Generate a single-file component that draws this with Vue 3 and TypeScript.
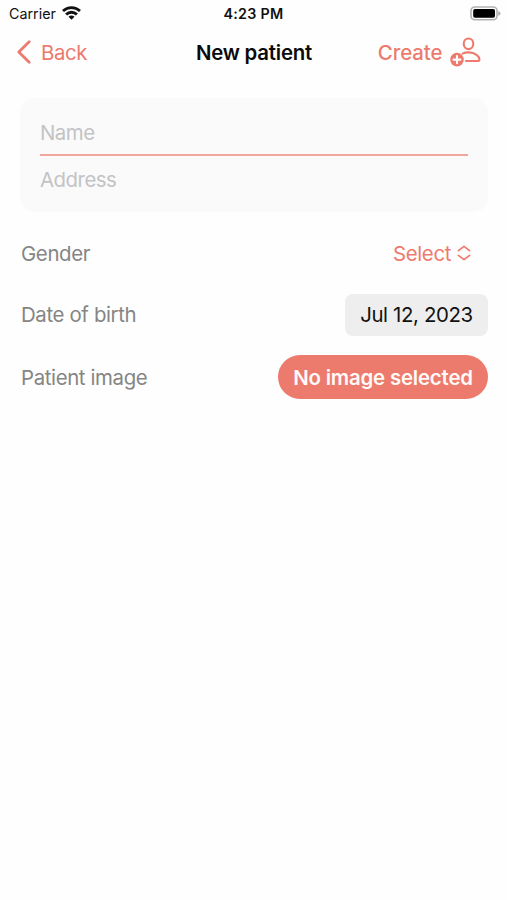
<script setup lang="ts">
import { ref } from 'vue'

const name = ref('')
const address = ref('')
const birthDate = ref('Jul 12, 2023')
</script>

<template>
  <main class="screen">
    <header class="status">
      <div class="carrier">
        <span class="carrier-name">Carrier</span>
        <svg class="wifi" width="19" height="14" viewBox="0 0 19 14">
          <path d="M1 5.1 A12.2 12.2 0 0 1 18 5.1" />
          <path d="M4.1 8.4 A7.8 7.8 0 0 1 14.9 8.4" />
          <path class="wifi-dot" d="M6.5 10.7 Q9.5 8.2 12.5 10.7 L9.5 13.7 Z" />
        </svg>
      </div>
      <span class="time">4:23 PM</span>
      <svg class="battery" width="31" height="15" viewBox="0 0 31 15">
        <rect class="shell" x="1" y="1" width="26" height="12.8" rx="3.8" />
        <rect x="3.2" y="3" width="21.8" height="8.8" rx="1.8" />
        <path class="cap" d="M28.2 5 Q30.6 5.8 30.6 7.4 Q30.6 9 28.2 9.8 Z" />
      </svg>
    </header>

    <nav class="nav">
      <button class="back" type="button">
        <svg width="16" height="26" viewBox="0 0 16 26">
          <path d="M13.2 2.8 L2.8 13 L13.2 23.2" />
        </svg>
        <span class="back-label">Back</span>
      </button>
      <h1 class="title">New patient</h1>
      <button class="create" type="button">
        <span class="create-label">Create</span>
        <svg width="32" height="32" viewBox="0 0 32 32">
          <ellipse cx="18.5" cy="7.8" rx="4.8" ry="5.3" />
          <path d="M12.6 17.6 Q15.2 16.3 18.8 16.4 C25.3 16.5 29.4 20.6 29.4 23.4 Q29.4 25 27.5 25 H16" />
          <circle class="badge" cx="7" cy="23.6" r="6.8" />
          <path class="plus" d="M3.5 23.6 H10.5 M7 20.1 V27.1" />
        </svg>
      </button>
    </nav>

    <section class="card">
      <input v-model="name" class="field name" type="text" placeholder="Name" aria-label="Name" />
      <input v-model="address" class="field address" type="text" placeholder="Address" aria-label="Address" />
    </section>

    <section class="rows">
      <div class="row gender">
        <span class="label">Gender</span>
        <button class="select" type="button">
          <span class="select-label">Select</span>
          <svg width="14" height="16" viewBox="0 0 14 16">
            <path d="M1.4 5.7 L7 1.3 L12.6 5.7 M1.4 10.3 L7 14.7 L12.6 10.3" />
          </svg>
        </button>
      </div>
      <div class="row birth">
        <span class="label">Date of birth</span>
        <button class="date" type="button"><span>{{ birthDate }}</span></button>
      </div>
      <div class="row image">
        <span class="label">Patient image</span>
        <button class="pill" type="button"><span class="pill-label">No image selected</span></button>
      </div>
    </section>
  </main>
</template>

<style>
body {
  background: #fefefe;
}
</style>

<style scoped>
.screen {
  box-sizing: border-box;
  width: 100%;
  min-height: 900px;
  background: #fefefe;
  color: #858585;
  font: 400 20.4px/26px Inter, "Liberation Sans", sans-serif;
  letter-spacing: -0.36px;
}
button {
  display: flex;
  align-items: center;
  border: 0;
  padding: 0;
  background: none;
  font: inherit;
  letter-spacing: inherit;
  color: #ec7b6d;
  white-space: nowrap;
}
svg {
  display: block;
  flex: none;
  fill: none;
  stroke: currentColor;
  stroke-linecap: round;
  stroke-linejoin: round;
}
.status {
  display: grid;
  grid-template-columns: minmax(0, 1fr) auto minmax(0, 1fr);
  align-items: center;
  height: 27px;
  padding: 0 6px;
  color: #111;
  font-size: 14.3px;
  letter-spacing: 0;
}
.carrier {
  display: flex;
  align-items: center;
  gap: 6px;
  padding-left: 3px;
}
.wifi {
  margin-bottom: 2px;
  stroke-width: 2.8;
  stroke-linecap: butt;
}
.wifi-dot {
  fill: currentColor;
  stroke: none;
}
.time {
  font-weight: 600;
  letter-spacing: 0.3px;
}
.battery {
  justify-self: end;
  fill: #000;
  stroke: none;
}
.battery .shell {
  fill: none;
  stroke: #b2b2b2;
  stroke-width: 1.6;
}
.battery .cap {
  fill: #b2b2b2;
}
.nav {
  display: grid;
  grid-template-columns: minmax(0, 1fr) auto minmax(0, 1fr);
  align-items: center;
  height: 50px;
  padding: 0 16px;
}
.back {
  gap: 9px;
}
.back svg {
  stroke-width: 2.8;
}
.back-label,
.create-label,
.title {
  padding-top: 2px;
}
.title {
  margin: 0;
  padding-left: 1px;
  color: #0a0a0a;
  font-size: 20.4px;
  font-weight: 600;
  letter-spacing: -0.2px;
}
.create {
  justify-self: end;
  gap: 7px;
  margin-right: 9.5px;
  font-weight: 500;
  letter-spacing: -0.05px;
}
.create svg {
  stroke-width: 2.1;
}
.create .badge {
  fill: #ec7b6d;
  stroke: none;
}
.create .plus {
  stroke: #fff;
}
.card {
  display: flex;
  flex-direction: column;
  box-sizing: border-box;
  height: 114px;
  margin: 21px 19px 0 20px;
  padding: 10px 20px;
  border-radius: 15px;
  background: #fafafa;
}
.field {
  box-sizing: border-box;
  width: 100%;
  height: 48px;
  padding: 2px 0 0;
  border: 0;
  outline: 0;
  background: none;
  color: #222;
  font: inherit;
  letter-spacing: -0.5px;
}
.field::placeholder {
  color: #c3c3c5;
  opacity: 1;
}
.name {
  height: 49px;
  padding-top: 3px;
  border-bottom: 2px solid #f2a59c;
}
.rows {
  display: flex;
  flex-direction: column;
  margin: 20px 19px 0 21px;
}
.row {
  display: flex;
  align-items: center;
  justify-content: space-between;
}
.gender {
  height: 42px;
  padding-right: 17px;
}
.gender .label,
.select-label,
.image .label,
.pill-label {
  padding-top: 1px;
}
.select {
  gap: 6px;
}
.select svg {
  stroke-width: 1.7;
}
.birth {
  height: 81px;
}
.image {
  height: 44px;
}
.date {
  justify-content: center;
  width: 143px;
  height: 42px;
  border-radius: 8px;
  background: #eee;
  color: #111;
}
.pill {
  justify-content: center;
  width: 210px;
  height: 44px;
  border-radius: 22px;
  background: #ec7b6d;
  color: #fffaf8;
  font-weight: 600;
  letter-spacing: -0.18px;
}
</style>
